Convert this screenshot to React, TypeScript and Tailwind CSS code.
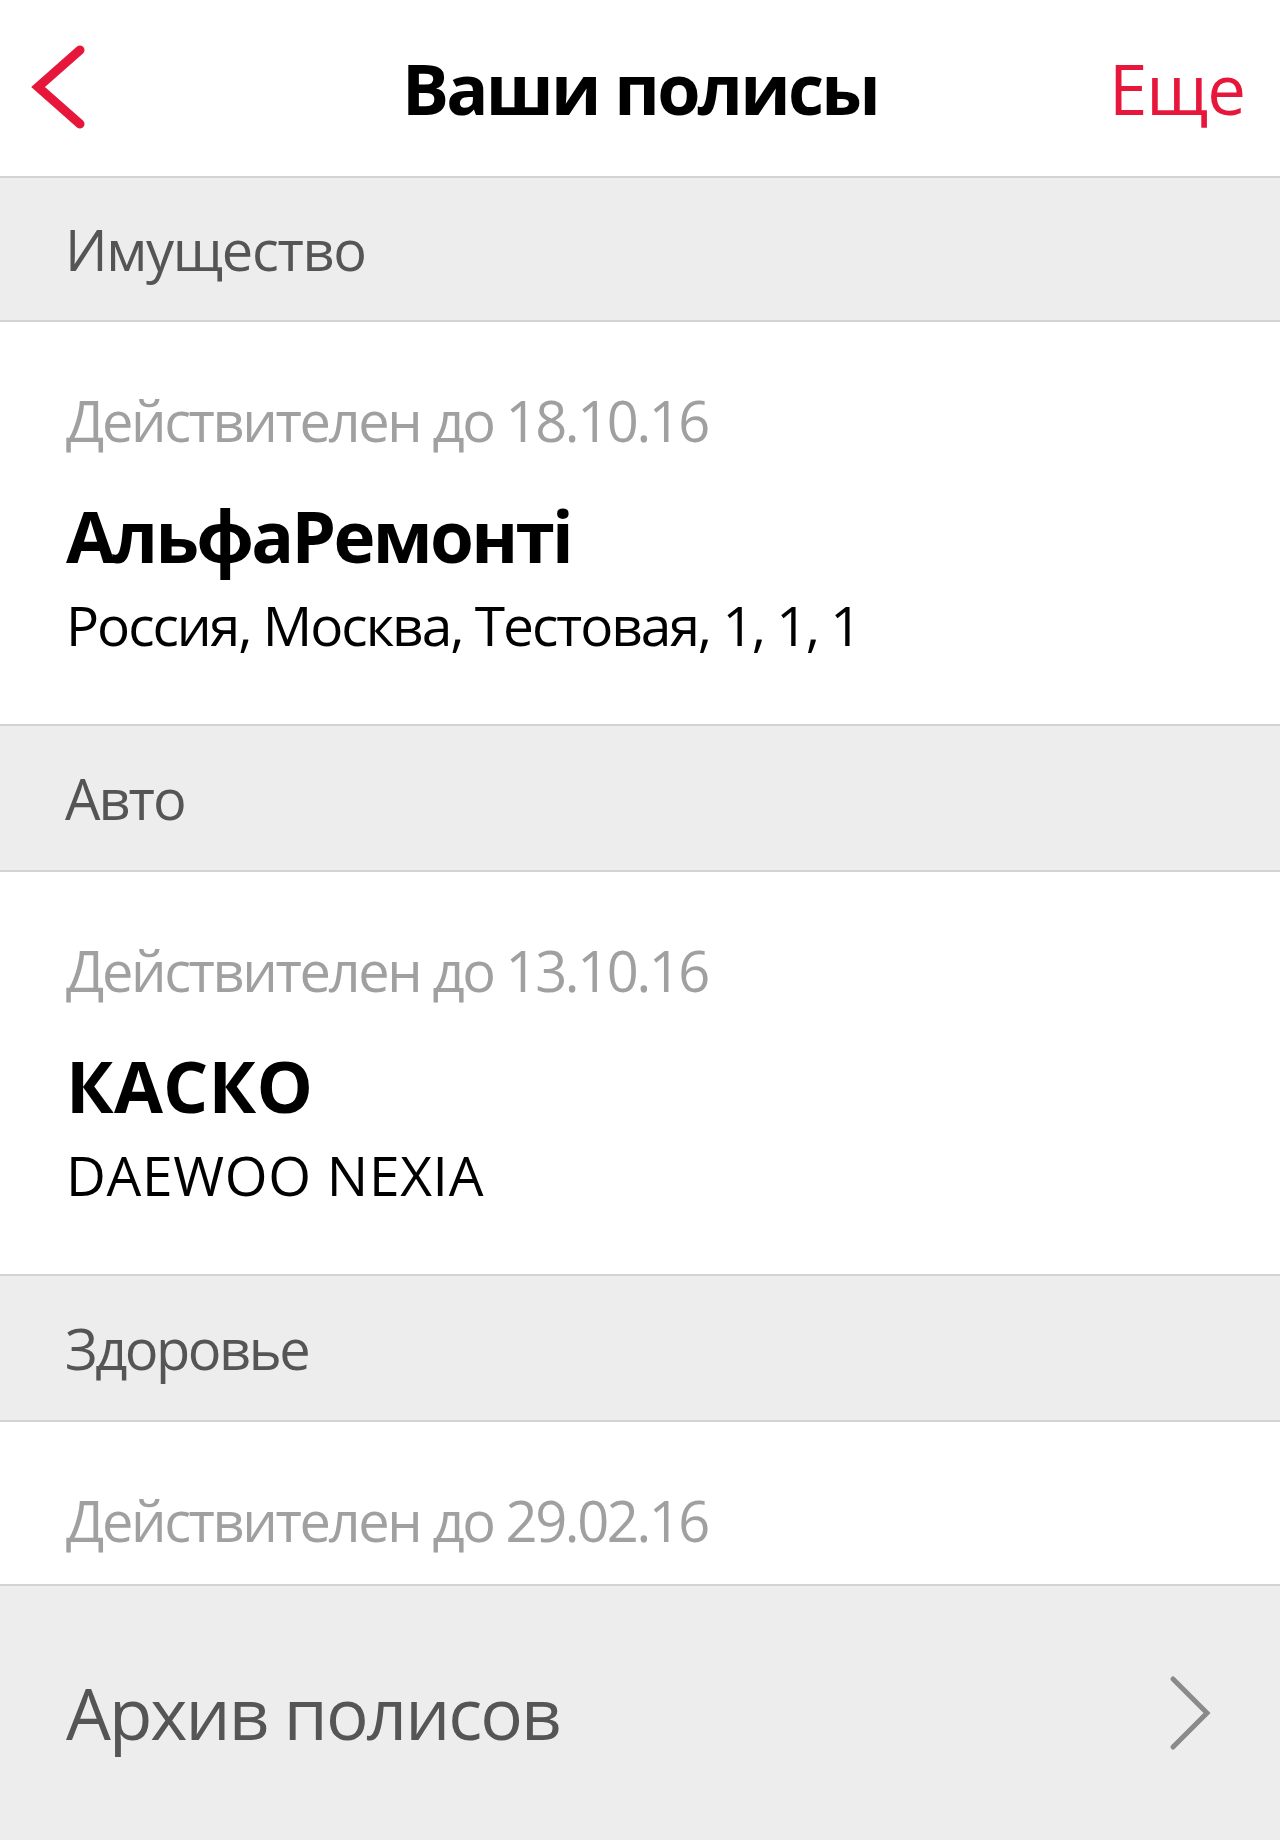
import React from "react";

const font = { fontFamily: '"Open Sans", "Noto Sans", sans-serif' };

function Band({ label, h, track }: { label: string; h: string; track: string }) {
  return (
    <div className={`${h} flex items-center bg-[#ededed] border-b-2 border-[#d1d3d6] pl-[65px]`}>
      <span className={`text-[56px] leading-[64px] text-[#555555] ${track}`}>{label}</span>
    </div>
  );
}

function Card({
  date,
  name,
  sub,
  nameTrack = "tracking-[-2.7px]",
  subTrack = "tracking-[-2px]",
}: {
  date: string;
  name?: string;
  sub?: string;
  nameTrack?: string;
  subTrack?: string;
}) {
  return (
    <div className={`bg-white border-b-2 border-[#d1d3d6] pl-[66px] pt-[66px] ${name ? "pb-[67px]" : "pb-[32px]"}`}>
      <div className="text-[56px] leading-[64px] text-[#a0a0a0] tracking-[-2.4px] whitespace-nowrap">{date}</div>
      {name && (
        <div className={`mt-[44px] text-[71px] leading-[80px] font-bold text-black whitespace-nowrap ${nameTrack}`}>{name}</div>
      )}
      {sub && (
        <div className={`mt-[17px] text-[55px] leading-[64px] text-black whitespace-nowrap ${subTrack}`}>{sub}</div>
      )}
    </div>
  );
}

export default function App() {
  return (
    <div className="w-[1280px] h-[1840px] bg-[#ededed] overflow-hidden" style={font}>
      <div className="h-[178px] bg-white border-b-2 border-[#d1d3d6] flex items-center justify-between relative">
        <div className="w-[120px] h-full flex items-center pl-[29px]">
          <svg width="60" height="90" viewBox="0 0 60 90">
            <path d="M51 7 L9 44 L51 81" fill="none" stroke="#e7173c" strokeWidth="9" strokeLinecap="round" strokeLinejoin="miter" />
          </svg>
        </div>
        <div className="absolute left-0 right-0 top-0 bottom-0 flex items-center justify-center pointer-events-none">
          <span className="text-[70px] leading-[80px] font-bold text-black tracking-[-2.7px]">Ваши полисы</span>
        </div>
        <div className="pr-[35px] text-[69px] leading-[80px] text-[#e7173c] tracking-[-1px]">Еще</div>
      </div>
      <Band label="Имущество" h="h-[144px]" track="tracking-[-1.3px]" />
      <Card date="Действителен до 18.10.16" name="АльфаРемонті" sub="Россия, Москва, Тестовая, 1, 1, 1" />
      <Band label="Авто" h="h-[146px]" track="tracking-[-2px]" />
      <Card
        date="Действителен до 13.10.16"
        name="КАСКО"
        sub="DAEWOO NEXIA"
        nameTrack="tracking-[0.2px]"
        subTrack="tracking-[0.7px]"
      />
      <Band label="Здоровье" h="h-[146px]" track="tracking-[-2.5px]" />
      <Card date="Действителен до 29.02.16" />
      <div className="h-[254px] bg-[#ededed] flex items-center justify-between pl-[66px] pr-[68px]">
        <span className="text-[71px] leading-[80px] text-[#555555] tracking-[-2px]">Архив полисов</span>
        <svg width="44" height="76" viewBox="0 0 44 76">
          <path d="M5 4 L39 38 L5 72" fill="none" stroke="#8a8a8a" strokeWidth="5" strokeLinecap="round" />
        </svg>
      </div>
    </div>
  );
}
